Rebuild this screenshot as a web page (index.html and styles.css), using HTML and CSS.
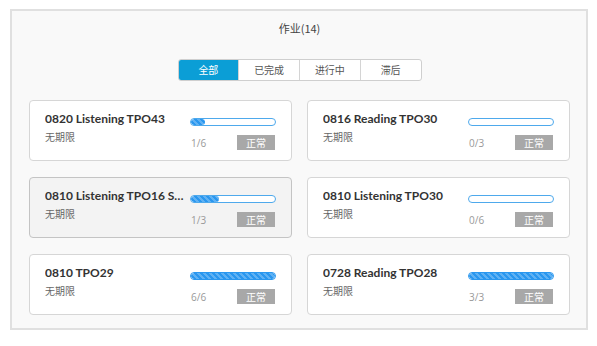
FILE: index.html
```html
<!DOCTYPE html>
<html lang="zh-CN">
<head>
<meta charset="utf-8">
<title>作业</title>
<link rel="stylesheet" href="styles.css">
</head>
<body>
<div class="panel">
  <div class="title">作业(14)</div>
  <div class="tabs">
    <div class="tab active">全部</div>
    <div class="tab">已完成</div>
    <div class="tab">进行中</div>
    <div class="tab">滞后</div>
  </div>
  <div class="grid">
    <div class="card">
      <div class="info">
        <div class="name">0820 Listening TPO43</div>
        <div class="due">无期限</div>
      </div>
      <div class="side">
        <div class="bar"><div class="fill" style="width:16.7%"></div></div>
        <div class="meta"><span class="count">1/6</span><span class="badge">正常</span></div>
      </div>
    </div>
    <div class="card">
      <div class="info">
        <div class="name">0816 Reading TPO30</div>
        <div class="due">无期限</div>
      </div>
      <div class="side">
        <div class="bar"></div>
        <div class="meta"><span class="count">0/3</span><span class="badge">正常</span></div>
      </div>
    </div>
    <div class="card hover">
      <div class="info">
        <div class="name">0810 Listening TPO16 Section 1</div>
        <div class="due">无期限</div>
      </div>
      <div class="side">
        <div class="bar"><div class="fill" style="width:33.3%"></div></div>
        <div class="meta"><span class="count">1/3</span><span class="badge">正常</span></div>
      </div>
    </div>
    <div class="card">
      <div class="info">
        <div class="name">0810 Listening TPO30</div>
        <div class="due">无期限</div>
      </div>
      <div class="side">
        <div class="bar"></div>
        <div class="meta"><span class="count">0/6</span><span class="badge">正常</span></div>
      </div>
    </div>
    <div class="card">
      <div class="info">
        <div class="name">0810 TPO29</div>
        <div class="due">无期限</div>
      </div>
      <div class="side">
        <div class="bar full"><div class="fill" style="width:100%"></div></div>
        <div class="meta"><span class="count">6/6</span><span class="badge">正常</span></div>
      </div>
    </div>
    <div class="card">
      <div class="info">
        <div class="name">0728 Reading TPO28</div>
        <div class="due">无期限</div>
      </div>
      <div class="side">
        <div class="bar full"><div class="fill" style="width:100%"></div></div>
        <div class="meta"><span class="count">3/3</span><span class="badge">正常</span></div>
      </div>
    </div>
  </div>
</div>
</body>
</html>
```
FILE: styles.css
```css
* { box-sizing: border-box; }
html, body { margin: 0; padding: 0; background: #fff; }
body {
  font-family: "Open Sans", "Noto Sans CJK SC", sans-serif;
  color: #333;
}
.panel {
  margin: 9px 0 0 10px;
  width: 578px;
  height: 321px;
  border: 2px solid #e0e0e0;
  background: #f9f9f9;
  padding: 9px 16px 0 17px;
}
.title {
  text-align: center;
  font-size: 11px;
  line-height: 16px;
  color: #444;
  font-family: "Noto Sans CJK SC", sans-serif;
}
.tabs {
  display: flex;
  width: 244px;
  height: 22px;
  margin: 23px auto 0;
  border: 1px solid #cfcfcf;
  border-radius: 3px;
  background: #fff;
  overflow: hidden;
}
.tab {
  flex: 1;
  font-size: 10px;
  line-height: 20px;
  text-align: center;
  color: #555;
  border-left: 1px solid #d4d4d4;
  font-family: "Noto Sans CJK SC", sans-serif;
}
.tab:first-child { border-left: none; }
.tab.active { background: #0b9ed6; color: #fff; }
.grid {
  margin-top: 19px;
  display: grid;
  grid-template-columns: 263px 263px;
  column-gap: 15px;
  row-gap: 16px;
  grid-auto-rows: 61px;
}
.card {
  display: flex;
  border: 1px solid #d6d6d6;
  border-radius: 4px;
  background: #fff;
  padding: 0 15px;
}
.card.hover { background: #f3f3f3; border-color: #c4c4c4; }
.info { flex: 1; min-width: 0; padding-top: 10px; }
.name {
  font-family: "Lato", "Open Sans", sans-serif;
  font-size: 12px;
  font-weight: 700;
  line-height: 16px;
  color: #333;
  white-space: nowrap;
  overflow: hidden;
  text-overflow: ellipsis;
}
.due {
  margin-top: 3px;
  font-size: 10px;
  line-height: 14px;
  color: #666;
  font-family: "Noto Sans CJK SC", sans-serif;
}
.side { width: 86px; flex: none; padding-top: 17px; }
.bar {
  height: 8px;
  border: 1px solid #4ea9ec;
  border-radius: 4px;
  background: #fff;
  overflow: hidden;
}
.bar.full { border-color: #2a97ef; }
.fill {
  height: 100%;
  border-radius: 4px;
  background-color: #2a97ef;
  background-image: linear-gradient(45deg, rgba(255,255,255,.25) 25%, transparent 25%, transparent 50%, rgba(255,255,255,.25) 50%, rgba(255,255,255,.25) 75%, transparent 75%, transparent);
  background-size: 6px 6px;
}
.meta {
  margin-top: 9px;
  display: flex;
  justify-content: space-between;
  align-items: center;
  height: 15px;
}
.count { font-size: 10px; color: #999; padding-left: 1px; }
.badge {
  width: 38px;
  height: 15px;
  margin-right: 1px;
  background: #a8a8a8;
  color: #fff;
  font-size: 10px;
  line-height: 15px;
  text-align: center;
  font-family: "Noto Sans CJK SC", sans-serif;
}
```
